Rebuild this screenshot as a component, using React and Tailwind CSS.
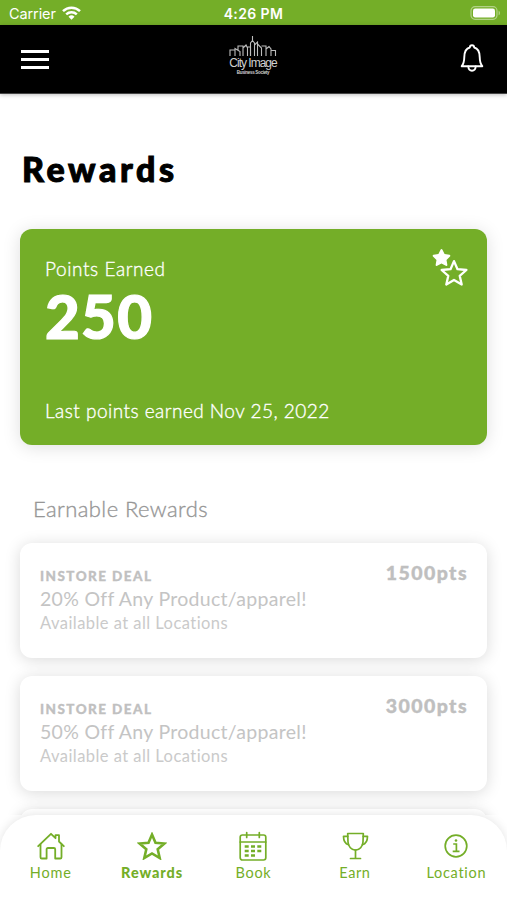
import { FaStar } from "react-icons/fa";

const rewards = [
  { id: 1, type: "INSTORE DEAL", points: "1500pts", title: "20% Off Any Product/apparel!", note: "Available at all Locations" },
  { id: 2, type: "INSTORE DEAL", points: "3000pts", title: "50% Off Any Product/apparel!", note: "Available at all Locations" },
]

const STAR = "M14 2.6l3.5 8.1 8.9.8-6.7 5.8 2 8.7-7.7-4.6L6.300 26l2-8.700-6.700-5.800 8.900-.8z";

function HomeIcon() {
  return (
    <svg width="28" height="28" viewBox="0 0 28 28" fill="none" stroke="#74ae28" strokeWidth="1.8" strokeLinejoin="round" strokeLinecap="round">
      <path d="M1.200 14.200L14 1.800l4.500 4.400V3.200h3.500v6.300L26.800 14.200" />
      <path d="M3.500 12.500v12.700c0 .8.5 1.300 1.300 1.300h4.800V17.300c0-.8.5-1.300 1.300-1.300h6c.8 0 1.300.5 1.300 1.300v9.200h5c.8 0 1.300-.5 1.300-1.300V12.500" />
    </svg>
  )
}

function StarIcon() {
  return (
    <svg width="30" height="28" viewBox="-1 0 30 28" fill="none" stroke="#74ae28" strokeWidth="2.6" strokeLinejoin="miter">
      <path d={STAR} />
    </svg>
  )
}

function CalendarIcon() {
  return (
    <svg width="30" height="30" viewBox="0 0 30 30" fill="none" stroke="#74ae28" strokeWidth="1.700" strokeLinecap="round">
      <rect x="2.200" y="4" width="25.600" height="25" rx="2.200" />
      <path d="M2.200 11h25.600M8.700 1.500v5M21.300 1.500v5" />
      <path d="M8 15.500h1.400M14.300 15.500h1.400M20.600 15.500h1.400M8 20h1.400M14.300 20h1.400M20.600 20h1.400M8 24.500h1.400M14.300 24.500h1.400" strokeWidth="2.600" strokeLinecap="square" />
    </svg>
  )
}

function TrophyIcon() {
  return (
    <svg width="28" height="28" viewBox="-1 0 28 28" fill="none" stroke="#74ae28" strokeWidth="1.7" strokeLinecap="round" strokeLinejoin="round">
      <path d="M5.700 1.500h15.600l-.3 8.500c-.2 4.500-3.500 8.200-7.500 8.200S6.200 14.500 6 10z" />
      <path d="M5.800 4.300H1.500c0 4.600 1.700 7.600 5.100 8.500M21.200 4.300h4.300c0 4.600-1.700 7.600-5.100 8.500M13.500 18.200v8M8.500 26.500h10" />
    </svg>
  )
}

function InfoIcon() {
  return (
    <svg width="26" height="26" viewBox="0 0 26 26" fill="none" stroke="#74ae28" strokeWidth="1.700">
      <circle cx="13" cy="13" r="10.800" />
      <path d="M10.200 11h3.200v7.300M9.700 18.400h6.800" />
      <circle cx="13" cy="7.500" r="1.300" fill="#74ae28" stroke="none" />
    </svg>
  )
}

const tabs = [
  { label: "Home", icon: HomeIcon, text: "tracking-[0.8px]" },
  { label: "Rewards", icon: StarIcon, text: "font-black tracking-[0.9px]" },
  { label: "Book", icon: CalendarIcon, text: "tracking-[0.7px]" },
  { label: "Earn", icon: TrophyIcon, text: "tracking-[0.6px]" },
  { label: "Location", icon: InfoIcon, text: "tracking-[0.7px]" },
]

function StatusBar() {
  return (
    <div className="grid grid-cols-3 items-center h-[25px] pt-[2px] px-[9px] bg-[#74ae28] text-white font-[Inter,sans-serif] text-[14px]">
      <div className="flex items-center gap-[6px]">
        <span className="text-[14.5px] tracking-[-0.1px]">Carrier</span>
        <svg className="-mt-[2px]" width="19" height="14" viewBox="0 0 19 14" fill="none" stroke="white" strokeWidth="2.500">
          <path d="M1 5.200a12.200 12.200 0 0 1 17 0M4.200 8.400a7.700 7.700 0 0 1 10.600 0" />
          <path d="M9.500 13.800L6.500 10.700a4.300 4.300 0 0 1 6 0z" fill="white" stroke="none" />
        </svg>
      </div>
      <span className="text-center font-semibold whitespace-nowrap tracking-[0.400px]">4:26 PM</span>
      <svg className="justify-self-end -mr-[3px] -mt-[2px]" width="31" height="14" viewBox="0 0 31 14">
        <rect x="1" y="0.700" width="26" height="12.600" rx="4" fill="none" stroke="#b2d287" strokeWidth="1.200" />
        <rect x="3" y="2.500" width="22" height="9" rx="2.200" fill="white" />
        <path d="M28.600 4.700c1.800.7 1.800 3.900 0 4.600z" fill="#b2d287" />
      </svg>
    </div>
  )
}

function Logo() {
  return (
    <div className="flex flex-col items-center w-[50px] text-[#d0d0d0]">
      <svg width="48" height="21" viewBox="0 0 48 21" fill="none" stroke="#bdbdbd" strokeWidth="1.100">
        <path d="M1 20v-6h5v6M6 14v-1.500l5 3V20M9 14v-4h5v10M14 12l3-3 1.500 3v8M18.500 11h3v9" />
        <path d="M21.500 20V7l2-2.500V0v4.500l2 2.500v13M25.500 9l3-3v14M28.500 8l4 4v8M32.500 10h4.500v10M37 13l3-2.500 2 2.500v7M42 14.500h4.500V20" />
      </svg>
      <span className="h-[12px] leading-[12px] text-[12px] tracking-[-1px] whitespace-nowrap font-['Liberation_Sans',sans-serif]">City Image</span>
      <span className="mt-px h-[5px] leading-[5px] text-[4.5px] whitespace-nowrap font-['Liberation_Sans',sans-serif] font-bold tracking-[-0.300px]">Business Society</span>
    </div>
  )
}

function Header() {
  return (
    <header className="relative z-10 flex items-center justify-between h-[69px] pl-[21px] pr-[22px] bg-black border-b border-[#444] shadow-[0_1px_4px_rgba(0,0,0,0.25)]">
      <button className="flex flex-col gap-[5px] w-7 pt-px">
        <span className="h-[3px] w-7 bg-white"></span>
        <span className="h-[3px] w-7 bg-white"></span>
        <span className="h-[3px] w-7 bg-white"></span>
      </button>
      <div className="-mt-[8px] ml-[-2px]">
        <Logo />
      </div>
      <svg className="-mt-[2px]" width="26" height="28" viewBox="0 0 26 28" fill="none" stroke="white" strokeWidth="1.900" strokeLinejoin="round" strokeLinecap="round">
        <path d="M2.700 22.200h20.600c-2.100-2.400-2.500-4-2.600-9.200-.1-5.600-1.800-8.600-5.500-9.500-.1-1.700-.9-2.300-2.200-2.300s-2.100.6-2.200 2.300C7.100 4.400 5.400 7.400 5.300 13c-.1 5.200-.5 6.800-2.600 9.200z" />
        <path d="M9.300 22.500c.2 2.800 1.500 4.200 3.700 4.200s3.500-1.400 3.700-4.200" />
      </svg>
    </header>
  )
}

function RewardCard({ reward }) {
  return (
    <div className="flex justify-between h-[115px] rounded-[12px] bg-white pl-5 pr-[20px] pt-[20px] shadow-[0_2px_16px_rgba(0,0,0,0.15)]">
      <div className="flex flex-col whitespace-nowrap">
        <p className="text-[13.5px] leading-[26px] font-black tracking-[1.450px] text-[#c0c0c0] [-webkit-text-stroke:0.3px_#c0c0c0]">{reward.type}</p>
        <p className="text-[19.5px] leading-[22px] -mt-px tracking-[0.300px] text-[#c4c4c4]">{reward.title}</p>
        <p className="text-[16.500px] leading-[24px] mt-px tracking-[0.450px] text-[#cacaca]">{reward.note}</p>
      </div>
      <p className="text-[19.500px] leading-[20px] font-black tracking-[1.450px] -mr-px text-[#bfbfbf] [-webkit-text-stroke:0.4px_#bfbfbf]">{reward.points}</p>
    </div>
  )
}

function App() {
  return (
    <div className="flex flex-col h-[900px] w-full overflow-hidden bg-white font-[Lato,sans-serif]">
      <StatusBar />
      <Header />

      <main className="flex-1 min-h-0 overflow-hidden px-5">
        <h1 className="mt-[51px] ml-[2px] text-[34px] leading-[48px] font-black tracking-[3.600px] text-black [-webkit-text-stroke:1px_black]">Rewards</h1>

        <section className="flex justify-between mt-[36px] h-[216px] rounded-[12px] bg-[#74ae28] text-white pl-[25px] pr-[19px] shadow-[0_2px_18px_rgba(0,0,0,0.13)]">
          <div className="flex flex-col whitespace-nowrap">
            <p className="mt-[28px] text-[19px] leading-6 font-light tracking-[0.600px] [-webkit-text-stroke:0.35px_white]">Points Earned</p>
            <p className="mt-[5px] text-[60px] leading-[60px] font-black tracking-[1.300px] [-webkit-text-stroke:1.2px_white]">250</p>
            <p className="mt-[53px] text-[19px] leading-6 font-light tracking-[0.480px] [-webkit-text-stroke:0.35px_white]">Last points earned Nov 25, 2022</p>
          </div>
          <div className="flex flex-col w-[36px] mt-[19px]">
            <FaStar className="text-[19px]" />
            <svg className="self-end -mt-[9px] -mr-px" width="30" height="29" viewBox="-1 0 30 28" fill="none" stroke="white" strokeWidth="2.300" strokeLinejoin="round">
              <path d={STAR} />
            </svg>
          </div>
        </section>

        <h2 className="mt-[50px] ml-[13px] text-[22px] leading-[28px] font-light tracking-[0.420px] text-[#969696] [-webkit-text-stroke:0.35px_#969696]">Earnable Rewards</h2>

        <div className="flex flex-col gap-[18px] mt-[20px]">
          {
            rewards.map((reward) => (
              <RewardCard key={reward.id} reward={reward} />
            ))
          }
          <div className="h-[115px] rounded-[12px] bg-white shadow-[0_2px_16px_rgba(0,0,0,0.15)]"></div>
        </div>
      </main>

      <nav className="relative z-10 grid grid-cols-5 shrink-0 h-[85px] rounded-t-[36px] bg-white text-[#74ae28] shadow-[0_-1px_10px_rgba(0,0,0,0.1)]">
        {
          tabs.map((tab) => {
            const Icon = tab.icon
            return (
              <button key={tab.label} className="flex flex-col items-center pt-[16px]">
                <span className="flex items-center justify-center h-[30px]"><Icon /></span>
                <span className={`mt-[2px] text-[14.500px] leading-5 ${tab.text}`}>{tab.label}</span>
              </button>
            )
          })
        }
      </nav>
    </div>
  )
}

export default App
